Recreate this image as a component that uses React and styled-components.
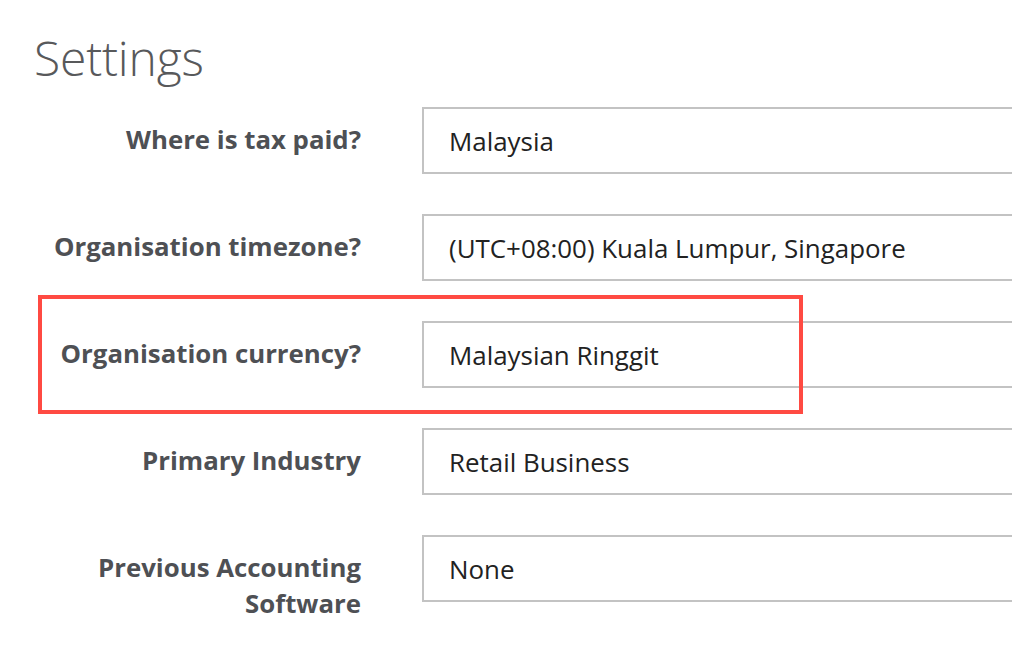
import styled, { createGlobalStyle } from 'styled-components';

const GlobalStyle = createGlobalStyle`
	html, body {
		margin: 0;
		padding: 0;
		background: #ffffff;
		overflow: hidden;
	}
	body {
		font-family: 'Open Sans', 'Liberation Sans', sans-serif;
	}
`;

const fields = [
	{ label: 'Where is tax paid?', value: 'Malaysia' },
	{ label: 'Organisation timezone?', value: '(UTC+08:00) Kuala Lumpur, Singapore' },
	{ label: 'Organisation currency?', value: 'Malaysian Ringgit', highlighted: true },
	{ label: 'Primary Industry', value: 'Retail Business' },
	{ label: 'Previous Accounting Software', value: 'None' },
];

const App = () => {
	return (
		<>
			<GlobalStyle />
			<Page>
				<Title>Settings</Title>
				<Form>
					{fields.map((field) => (
						<Row key={field.label}>
							{field.highlighted && <Highlight />}
							<Label>{field.label}</Label>
							<Field>{field.value}</Field>
						</Row>
					))}
				</Form>
			</Page>
		</>
	);
};

const Page = styled.main`
	width: 100vw;
	height: 100vh;
	overflow: hidden;
	padding: 29px 0 0 34px;
	box-sizing: border-box;
`;

const Title = styled.h1`
	margin: 0;
	font-family: 'Open Sans', 'Liberation Sans', sans-serif;
	font-weight: 300;
	font-size: 48px;
	line-height: 58px;
	color: #58595b;
	letter-spacing: -0.2px;
`;

const Form = styled.section`
	display: flex;
	flex-direction: column;
	gap: 40px;
	margin-top: 20px;
`;

const Row = styled.div`
	position: relative;
	display: flex;
	align-items: flex-start;
	gap: 61px;
`;

const Highlight = styled.div`
	position: absolute;
	top: -26px;
	bottom: -26px;
	left: 4px;
	width: 765px;
	box-sizing: border-box;
	border: 4px solid #ff4a42;
	pointer-events: none;
`;

const Label = styled.label`
	width: 327px;
	flex-shrink: 0;
	padding-top: 14px;
	text-align: right;
	font-weight: 700;
	font-size: 25.8px;
	line-height: 36px;
	color: #4e5054;
`;

const Field = styled.div`
	display: flex;
	align-items: center;
	flex-shrink: 0;
	width: 700px;
	height: 67px;
	box-sizing: border-box;
	padding-left: 25px;
	border: 2px solid #c3c3c3;
	background: #ffffff;
	font-size: 25.9px;
	color: #222222;
`;

export default App;
